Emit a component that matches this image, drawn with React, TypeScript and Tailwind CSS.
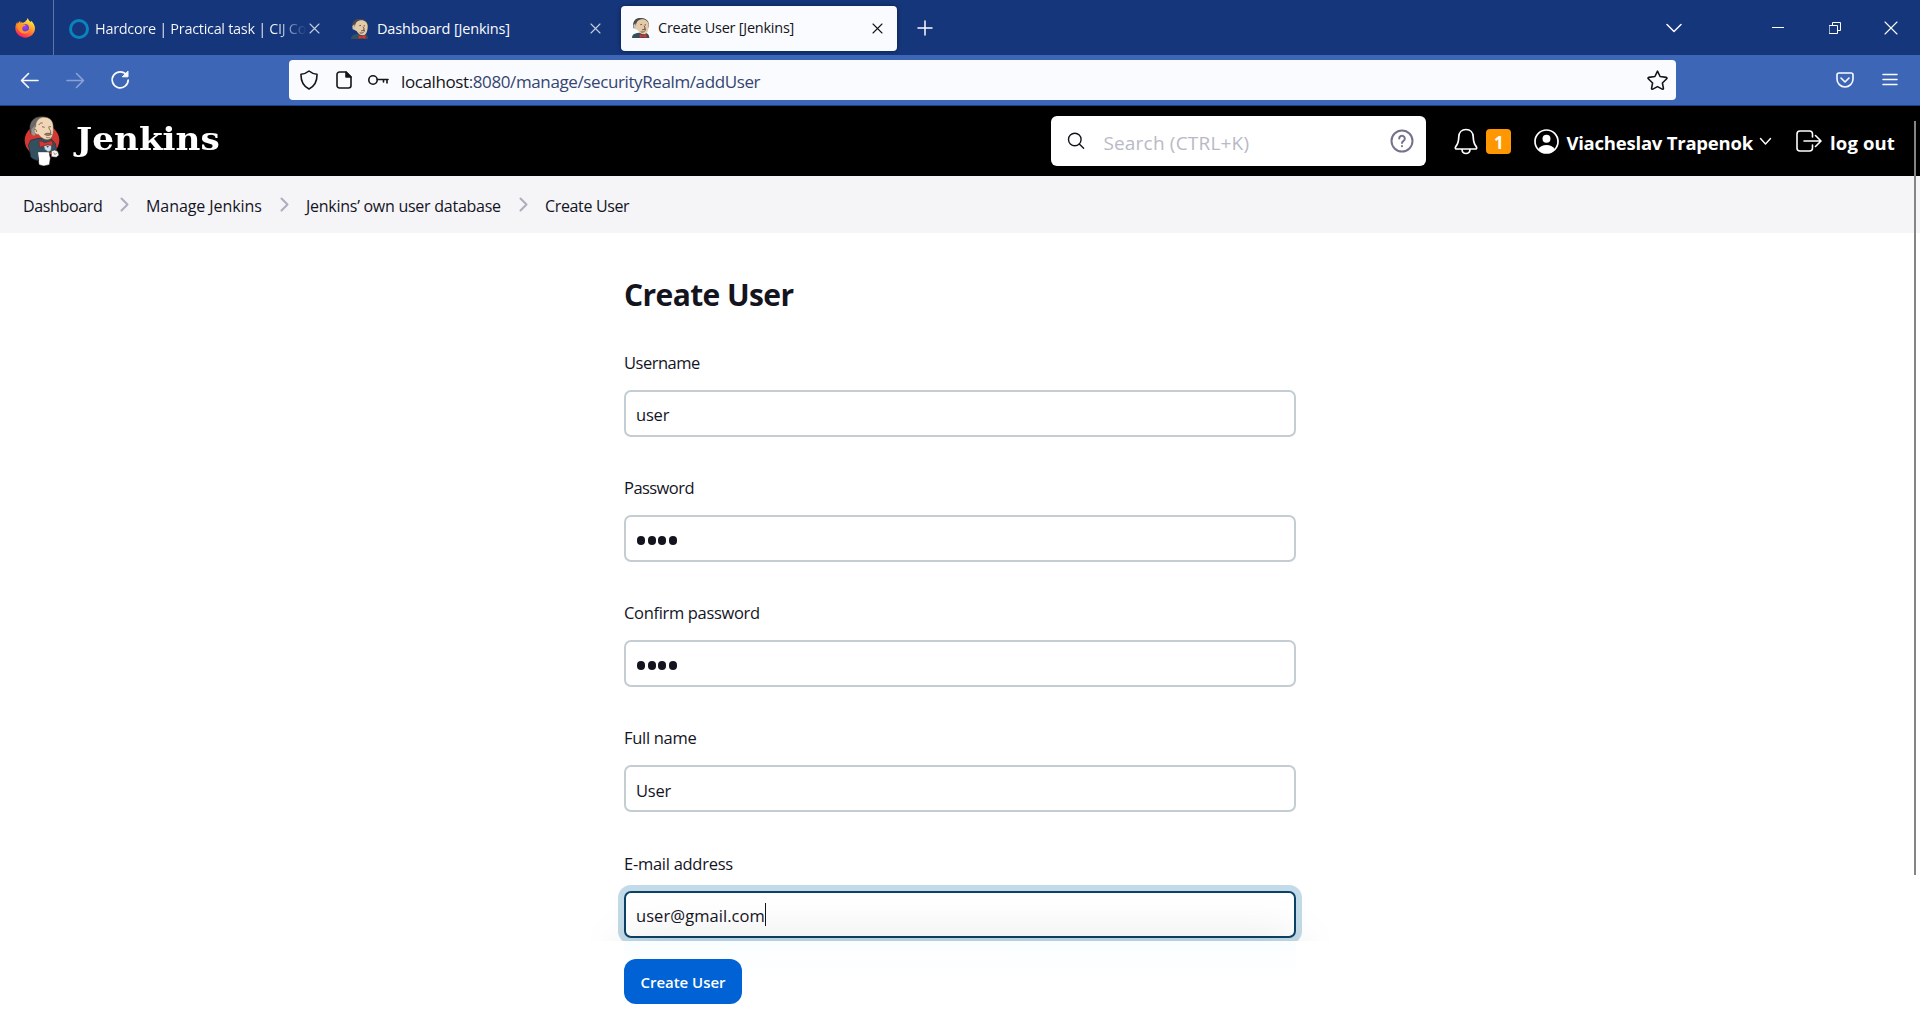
import type { ReactNode, SVGProps } from "react";

const stroke = {
  fill: "none",
  stroke: "currentColor",
  strokeLinecap: "round",
  strokeLinejoin: "round",
} as const;

function Icon({ w, h, sw = 1.5, children, ...rest }: { w: number; h: number; sw?: number; children: ReactNode } & SVGProps<SVGSVGElement>) {
  return (
    <svg width={w} height={h} viewBox={`0 0 ${w} ${h}`} strokeWidth={sw} {...stroke} {...rest}>
      {children}
    </svg>
  );
}

function FirefoxLogo() {
  return (
    <svg width="20" height="20" viewBox="0 0 60 60">
      <defs>
        <linearGradient id="fx-body" x1="0.8" y1="0.05" x2="0.3" y2="1">
          <stop offset="0" stopColor="#fff44f" />
          <stop offset="0.35" stopColor="#ffb02e" />
          <stop offset="0.65" stopColor="#ff6a36" />
          <stop offset="1" stopColor="#f5156c" />
        </linearGradient>
        <radialGradient id="fx-globe" cx="0.5" cy="0.35" r="0.65">
          <stop offset="0" stopColor="#a63cf5" />
          <stop offset="1" stopColor="#5b3fd0" />
        </radialGradient>
      </defs>
      <path d="M38 0c2 6 6 9 9 12 1-1 1-3 1-4 7 6 12 14 12 23 0 16-13 28-29 28S1 47 1 31c0-8 2-14 6-19l1 6c2-4 4-7 8-9l-1 5c3-2 6-2 9 0 3-1 6-2 8-5 3-2 5-5 6-9z" fill="url(#fx-body)" />
      <path d="M4 25c6-6 12-6 18-2-5 5-3 13 1 17-10 1-18-5-19-15z" fill="#ff7a1f" />
      <circle cx="30" cy="30" r="12" fill="url(#fx-globe)" />
      <path d="M7 20c6-4 12-4 18-1 3 0 6 1 7 3-1 2-4 3-7 3l-3 4c-2 8 4 12 11 11 5-1 7-4 10-5-2 8-9 12-17 11C15 45 7 35 7 20z" fill="#ff9726" />
    </svg>
  );
}

function ButlerHead() {
  return (
    <svg width="19" height="20" viewBox="1053 54 57 60">
      <path d="M1056 114c0-9 5-13 15-15l20-2c11 2 17 7 17 17z" fill="#335061" />
      <path d="M1060 85c-3-14 1-26 13-30 12-3 25 0 31 9 3 6 3 12 2 18l-7 5-29-3z" fill="#4a4a4c" />
      <path d="M1068 78c0-11 6-19 17-20 12-1 21 7 21 18 0 13-3 23-10 26-9 3-20-4-23-12-5 0-8-8-5-12z" fill="#e3cba9" />
      <path d="M1060 76l6-6 3 14-3 4-5-4z" fill="#c9c5bd" />
      <path d="M1081 74l5-1M1094 74l4 1M1092 77l4 8-4 2M1082 95c5 3 11 1 14-4" stroke="#4e3a2c" strokeWidth="2.400" fill="none" />
      <path d="M1086 90c4-2 9-2 12-1" stroke="#6e5545" strokeWidth="3" fill="none" />
      <path d="M1078 103l10 3 12-4v12l-12-3-9 3z" fill="#d33833" stroke="#81302d" strokeWidth="1" />
    </svg>
  );
}

function Butler() {
  return (
    <svg width="38" height="50" viewBox="69 48 114 150">
      <ellipse cx="126" cy="121" rx="52" ry="48" fill="#d33833" />
      <path d="M113 150l4 44 14 4 17-4 3-20-7-26z" fill="#fff" stroke="#231f20" strokeWidth="1.5" />
      <path d="M92 121l22-6 40 2 12 14 4 20-24 6h-30l1 25c-12-2-22-6-25-12l-4-24-3-10z" fill="#335061" stroke="#1c2a33" strokeWidth="2" />
      <path d="M114 157h33l-3 32-12 6-13-5z" fill="#fff" />
      <path d="M93 101c-7-18-4-35 8-44 15-11 40-9 52 4 5 6 7 13 6 21l-32 18z" fill="#6b6866" stroke="#231f20" strokeWidth="1.5" />
      <path d="M95 88l9-11 3 25-5 6-8-6z" fill="#9b9894" />
      <path d="M107 80c0-14 6-24 20-28 16-3 30 6 32 22 2 15 2 36-9 43-12 6-27-3-35-14-12 2-17-15-8-23z" fill="#f0d6b7" stroke="#6d5542" strokeWidth="1.300" />
      <path d="M116 75c3-5 7-7 12-6M126 80l8 2M145 81l8-1M146 83c3 6 8 11 6 17l-8 1M103 89c5-3 7 1 6 7" stroke="#3f3026" strokeWidth="2" fill="none" />
      <path d="M133 103c6-5 14-5 22 0-6 5-16 5-22 0z" fill="#9a7e66" stroke="#59442f" strokeWidth="1.5" />
      <path d="M138 111c4 3 9 3 13 1" stroke="#59442f" strokeWidth="1.800" fill="none" />
      <path d="M130 135h25l-2 17-9 4-10-8z" fill="#c9dce4" stroke="#335061" strokeWidth="2" />
      <path d="M117 121l18 7 21-6 3 15-16-3-8 3-16 5z" fill="#d33833" stroke="#701f1b" strokeWidth="1.5" />
      <path d="M139 138l4 5 4-5" fill="#335061" />
      <path d="M154 153l10-3 9 4 4 11-8 7-15-2z" fill="#f6f4f1" stroke="#231f20" strokeWidth="1.5" />
      <path d="M161 157l4 7 5-5" stroke="#231f20" strokeWidth="1.300" fill="none" />
    </svg>
  );
}

function Cross({ className }: { className: string }) {
  return (
    <Icon w={11} h={11} sw={1.1} className={className}>
      <path d="M1 1l9 9M10 1l-9 9" />
    </Icon>
  );
}

function TabBar() {
  return (
    <div className="flex h-[55px] shrink-0 items-center bg-[#15367b] text-[14.5px] text-[#fbfbfe]">
      <div className="flex h-full w-[54px] items-center border-r border-[#5c74a7] pl-[15px]">
        <FirefoxLogo />
      </div>
      <div className="flex w-[281px] items-center pt-[2px]">
        <div className="ml-[15px] size-5 rounded-full border-[3px] border-[#0a84bd]" />
        <div className="ml-[6px] w-[212px] overflow-hidden bg-linear-to-r from-[#fbfbfe] from-85% to-[#15367b] bg-clip-text tracking-[-0.31px] whitespace-nowrap text-transparent">
          Hardcore | Practical task | CIJ Co
        </div>
        <Cross className="mb-px ml-[2px] text-[#c5cde0]" />
      </div>
      <div className="flex w-[286px] items-center pt-[2px]">
        <div className="ml-[15px]">
          <ButlerHead />
        </div>
        <div className="ml-[8px] flex-1 tracking-[-0.17px]">Dashboard [Jenkins]</div>
        <Cross className="mr-[20px] mb-px text-[#c5cde0]" />
      </div>
      <div className="mt-px flex h-[45px] w-[276px] items-center rounded bg-[#fafbff] text-[#15141a] shadow-[0_0_4px_rgba(0,0,0,0.45)]">
        <div className="ml-[10px]">
          <ButlerHead />
        </div>
        <div className="ml-[8px] flex-1 tracking-[-0.24px]">Create User [Jenkins]</div>
        <Cross className="mr-[14px]" />
      </div>
      <Icon w={16} h={16} sw={1.5} className="ml-[20px]">
        <path d="M8 1v14M1 8h14" />
      </Icon>
      <div className="flex-1" />
      <Icon w={16} h={10} className="mr-[90px]">
        <path d="M1 1.500l7 7 7-7" />
      </Icon>
      <Icon w={12} h={2} sw={1} className="mr-[45px]" strokeLinecap="butt">
        <path d="M0 .5h12" />
      </Icon>
      <Icon w={12} h={12} sw={1} className="mr-[43px]" strokeLinejoin="miter">
        <path d="M.5 3.500h8v8h-8zM3.500 3.500V.5h8v8h-3" />
      </Icon>
      <Icon w={14} h={14} sw={1.1} className="mr-[22px]">
        <path d="M1 1l12 12M13 1L1 13" />
      </Icon>
    </div>
  );
}

function NavBar() {
  return (
    <div className="flex h-[51px] shrink-0 items-center border-b border-[#1d408b] bg-[#3d66b7] text-[#fbfbfe]">
      <Icon w={19} h={17} sw={1.6} className="ml-5">
        <path d="M18 8.500H2M8.500 1.500l-7 7 7 7" />
      </Icon>
      <Icon w={19} h={17} sw={1.6} className="ml-[27px] opacity-40">
        <path d="M1 8.500h16M10.500 1.500l7 7-7 7" />
      </Icon>
      <Icon w={20} h={20} sw={1.7} className="ml-[25px]">
        <path d="M16.700 5.200a8 8 0 1 0 1.500 4.800" />
        <path d="M18 1.500v5.300h-5.300z" fill="currentColor" strokeWidth="1" />
      </Icon>
      <div className="ml-[159px] flex h-10 w-[1387px] items-center rounded bg-[#fafbff] text-[#15141a]">
        <Icon w={18} h={20} sw={1.6} className="ml-[11px]">
          <path d="M9 1c2.300 2 5 2.900 8 3.200.2 6.700-2 11.800-8 14.800-6-3-8.200-8.100-8-14.800C4 3.900 6.700 3 9 1z" />
        </Icon>
        <Icon w={16} h={18} sw={1.6} className="ml-[18px]">
          <path d="M10 1H3.500a2.500 2.500 0 0 0-2.500 2.500v11A2.500 2.500 0 0 0 3.500 17h9a2.500 2.500 0 0 0 2.500-2.500V6z" />
          <path d="M10 1v5h5z" fill="currentColor" />
        </Icon>
        <Icon w={21} h={12} sw={1.6} className="ml-[16px]">
          <circle cx="5" cy="6" r="4.200" />
          <path d="M9.500 5.500H20M19 5.500v3.500M15.500 5.500v2.500" />
        </Icon>
        <div className="ml-[12px] flex-1 pt-[3px] text-[17px] tracking-[-0.39px] text-[#34456f]">
          <span className="text-[#15141a]">localhost</span>:8080/manage/securityRealm/addUser
        </div>
        <Icon w={21} h={20} sw={1.6} className="mr-[8px]">
          <path d="M10.500 1.200l2.600 5.300 6.100.9c.8.2 1 .9.500 1.400l-4.300 4.200 1 5.200c.1.800-.5 1.200-1.200.9l-4.700-2.500-4.700 2.500c-.7.300-1.300-.1-1.200-.9l1-5.200L1.300 8.800c-.5-.5-.3-1.200.5-1.400l6.100-.9z" />
        </Icon>
      </div>
      <div className="flex-1" />
      <Icon w={18} h={16} sw={1.6} className="mr-[28px]">
        <path d="M3 1h12a2 2 0 0 1 2 2v4a8 8 0 0 1-16 0V3a2 2 0 0 1 2-2zM5 6l4 4 4-4" />
      </Icon>
      <Icon w={16} h={14} sw={1.5} className="mr-[22px]">
        <path d="M1 1.500h14M1 6.500h14M1 11.500h14" />
      </Icon>
    </div>
  );
}

function Header() {
  return (
    <header className="flex h-[70px] shrink-0 items-center bg-black text-white">
      <div className="ml-[23px]">
        <Butler />
      </div>
      <div className="ml-[15px] flex-1 pb-[5px] font-['DejaVu_Serif'] text-[32px] leading-none font-bold">
        <span className="inline-block origin-left scale-x-[1.07]">Jenkins</span>
      </div>
      <div className="flex h-[50px] w-[375px] items-center rounded-[6px] bg-white">
        <Icon w={18} h={18} sw={1.4} className="ml-4 text-[#14141f]">
          <circle cx="7.800" cy="7.500" r="6.300" />
          <path d="M12.300 12l4.300 4.300" />
        </Icon>
        <div className="ml-[18px] flex-1 pt-[4px] text-[19px] tracking-[0.2px] text-[#b9b9c6]">Search (CTRL+K)</div>
        <Icon w={24} h={24} sw={2} className="mr-[12px] text-[#73738c]">
          <circle cx="12" cy="12" r="10.500" />
          <path d="M9.200 9.500a2.800 2.800 0 1 1 4.400 2.300c-1 .7-1.600 1.100-1.600 2.200M12 17v.2" />
        </Icon>
      </div>
      <Icon w={24} h={27} sw={1.7} className="ml-7">
        <path d="M12 1.500c-4.300 0-7 3-7.200 7.200-.2 5-.9 7.300-2.900 9.700-1.200 1.500-.4 2.600 1 2.600h18.200c1.400 0 2.200-1.100 1-2.600-2-2.400-2.700-4.700-2.900-9.700C19 4.500 16.300 1.500 12 1.500zM8 21.500c.2 2.700 1.700 4 4 4s3.800-1.300 4-4" />
      </Icon>
      <div className="ml-2 flex h-[25px] w-[25px] items-center justify-center rounded bg-[#ff9800] text-[17px] leading-[25px] font-bold">
        <span className="pt-[3px]">1</span>
      </div>
      <svg width="25" height="25" viewBox="0 0 25 25" className="ml-[23px]">
        <circle cx="12.500" cy="12.500" r="11.500" fill="none" stroke="white" strokeWidth="1.700" />
        <circle cx="12.500" cy="9.700" r="4" fill="white" />
        <path d="M4.500 20c1.500-2.800 4.500-4 8-4s6.500 1.200 8 4c-2 2.500-5 4-8 4s-6-1.500-8-4z" fill="white" />
      </svg>
      <div className="ml-[7px] pt-[4px] text-[18.5px] font-bold tracking-[-0.22px] whitespace-nowrap">Viacheslav Trapenok</div>
      <Icon w={13} h={9} sw={1.4} className="mt-px ml-[6px]">
        <path d="M1.500 1.500l5 5.500 5-5.500" />
      </Icon>
      <Icon w={26} h={22} sw={1.6} className="ml-[24px]">
        <path d="M16.500 7V4a3 3 0 0 0-3-3H4a3 3 0 0 0-3 3v14a3 3 0 0 0 3 3h9.500a3 3 0 0 0 3-3v-3M8 11h16.500M19.500 5.500L25 11l-5.500 5.500" />
      </Icon>
      <div className="ml-[8px] w-[90px] pt-[4px] text-[18.5px] font-bold tracking-[0.14px]">log out</div>
    </header>
  );
}

const crumbs = [
  { label: "Dashboard", box: "w-[79px] tracking-[-0.35px]" },
  { label: "Manage Jenkins", box: "w-[116px] tracking-[-0.07px]" },
  { label: "Jenkins’ own user database", box: "w-[195px] tracking-[-0.26px]" },
  { label: "Create User", box: "w-[85px] tracking-[-0.35px]" },
];

function Breadcrumbs() {
  return (
    <nav className="flex h-[57px] shrink-0 items-center bg-[#f5f5f8] pl-[23px] text-[16px] text-[#14141f]">
      {crumbs.map((c, i) => (
        <div key={c.label} className="flex items-center">
          {i > 0 && (
            <Icon w={9} h={15} sw={2} className="mr-[17px] ml-[18px] text-[#adadbd]">
              <path d="M1.500 1.500l6 6-6 6" />
            </Icon>
          )}
          <span className={`${c.box} pt-[2px] whitespace-nowrap`}>{c.label}</span>
        </div>
      ))}
    </nav>
  );
}

const fields = [
  { label: "Username", tracking: "tracking-[-0.5px]", value: "user", password: false },
  { label: "Password", tracking: "tracking-[-0.55px]", value: "4", password: true },
  { label: "Confirm password", tracking: "tracking-[-0.33px]", value: "4", password: true },
  { label: "Full name", tracking: "tracking-[-0.3px]", value: "User", password: false },
  { label: "E-mail address", tracking: "tracking-[-0.27px]", value: "user@gmail.com", password: false },
];

function Field({ field, focused }: { field: (typeof fields)[number]; focused: boolean }) {
  return (
    <div className="flex h-[125.15px] flex-col">
      <div className={`h-[41px] text-[16.5px] leading-[28px] ${field.tracking}`}>{field.label}</div>
      <div
        className={`flex h-[47px] items-center rounded-[7px] border-2 bg-white pl-[10px] text-[16.5px] ${
          focused ? "border-[#0b4266] shadow-[0_0_0_6px_#c3dae8]" : "border-[#c3cdd2]"
        }`}
      >
        {field.password ? (
          <div className="flex gap-[2.700px] pt-[4px] pl-px">
            {[0, 1, 2, 3].map((n) => (
              <span key={n} className="h-[9px] w-[8px] rounded-full bg-[#14141f]" />
            ))}
          </div>
        ) : (
          <span className={`pt-[4px] ${focused ? "tracking-[0.07px]" : "tracking-[-0.2px]"}`}>{field.value}</span>
        )}
        {focused && <span className="h-[23px] w-px bg-[#14141f]" />}
      </div>
    </div>
  );
}

export default function App() {
  return (
    <div className="relative flex h-[1020px] w-[1920px] flex-col overflow-hidden bg-white font-['Open_Sans',sans-serif]">
      <TabBar />
      <NavBar />
      <Header />
      <Breadcrumbs />
      <main className="relative flex h-[708px] shrink-0 justify-center overflow-hidden text-[#14141f]">
        <div className="w-[672px]">
          <h1 className="mt-[42px] h-[74px] text-[30px] leading-[40px] font-bold tracking-[-0.6px]">Create User</h1>
          {fields.map((f, i) => (
            <Field key={f.label} field={f} focused={i === fields.length - 1} />
          ))}
        </div>
        <div className="absolute top-full left-[624px] h-[79px] w-[672px] shadow-[0_0_50px_rgba(0,0,0,0.11)]" />
      </main>
      <footer className="flex h-[79px] justify-center bg-white">
        <div className="w-[672px] bg-linear-to-b from-[#fafdff] to-white to-50% pt-[18px]">
          <button className="h-[45px] w-[118px] rounded-[12px] bg-[#0062d4] pt-[2px] text-[15px] font-semibold tracking-[-0.05px] text-white">
            Create User
          </button>
        </div>
      </footer>
      <div className="absolute top-[121px] left-[1914px] h-[754px] w-[2px] bg-[#858585]" />
    </div>
  );
}
